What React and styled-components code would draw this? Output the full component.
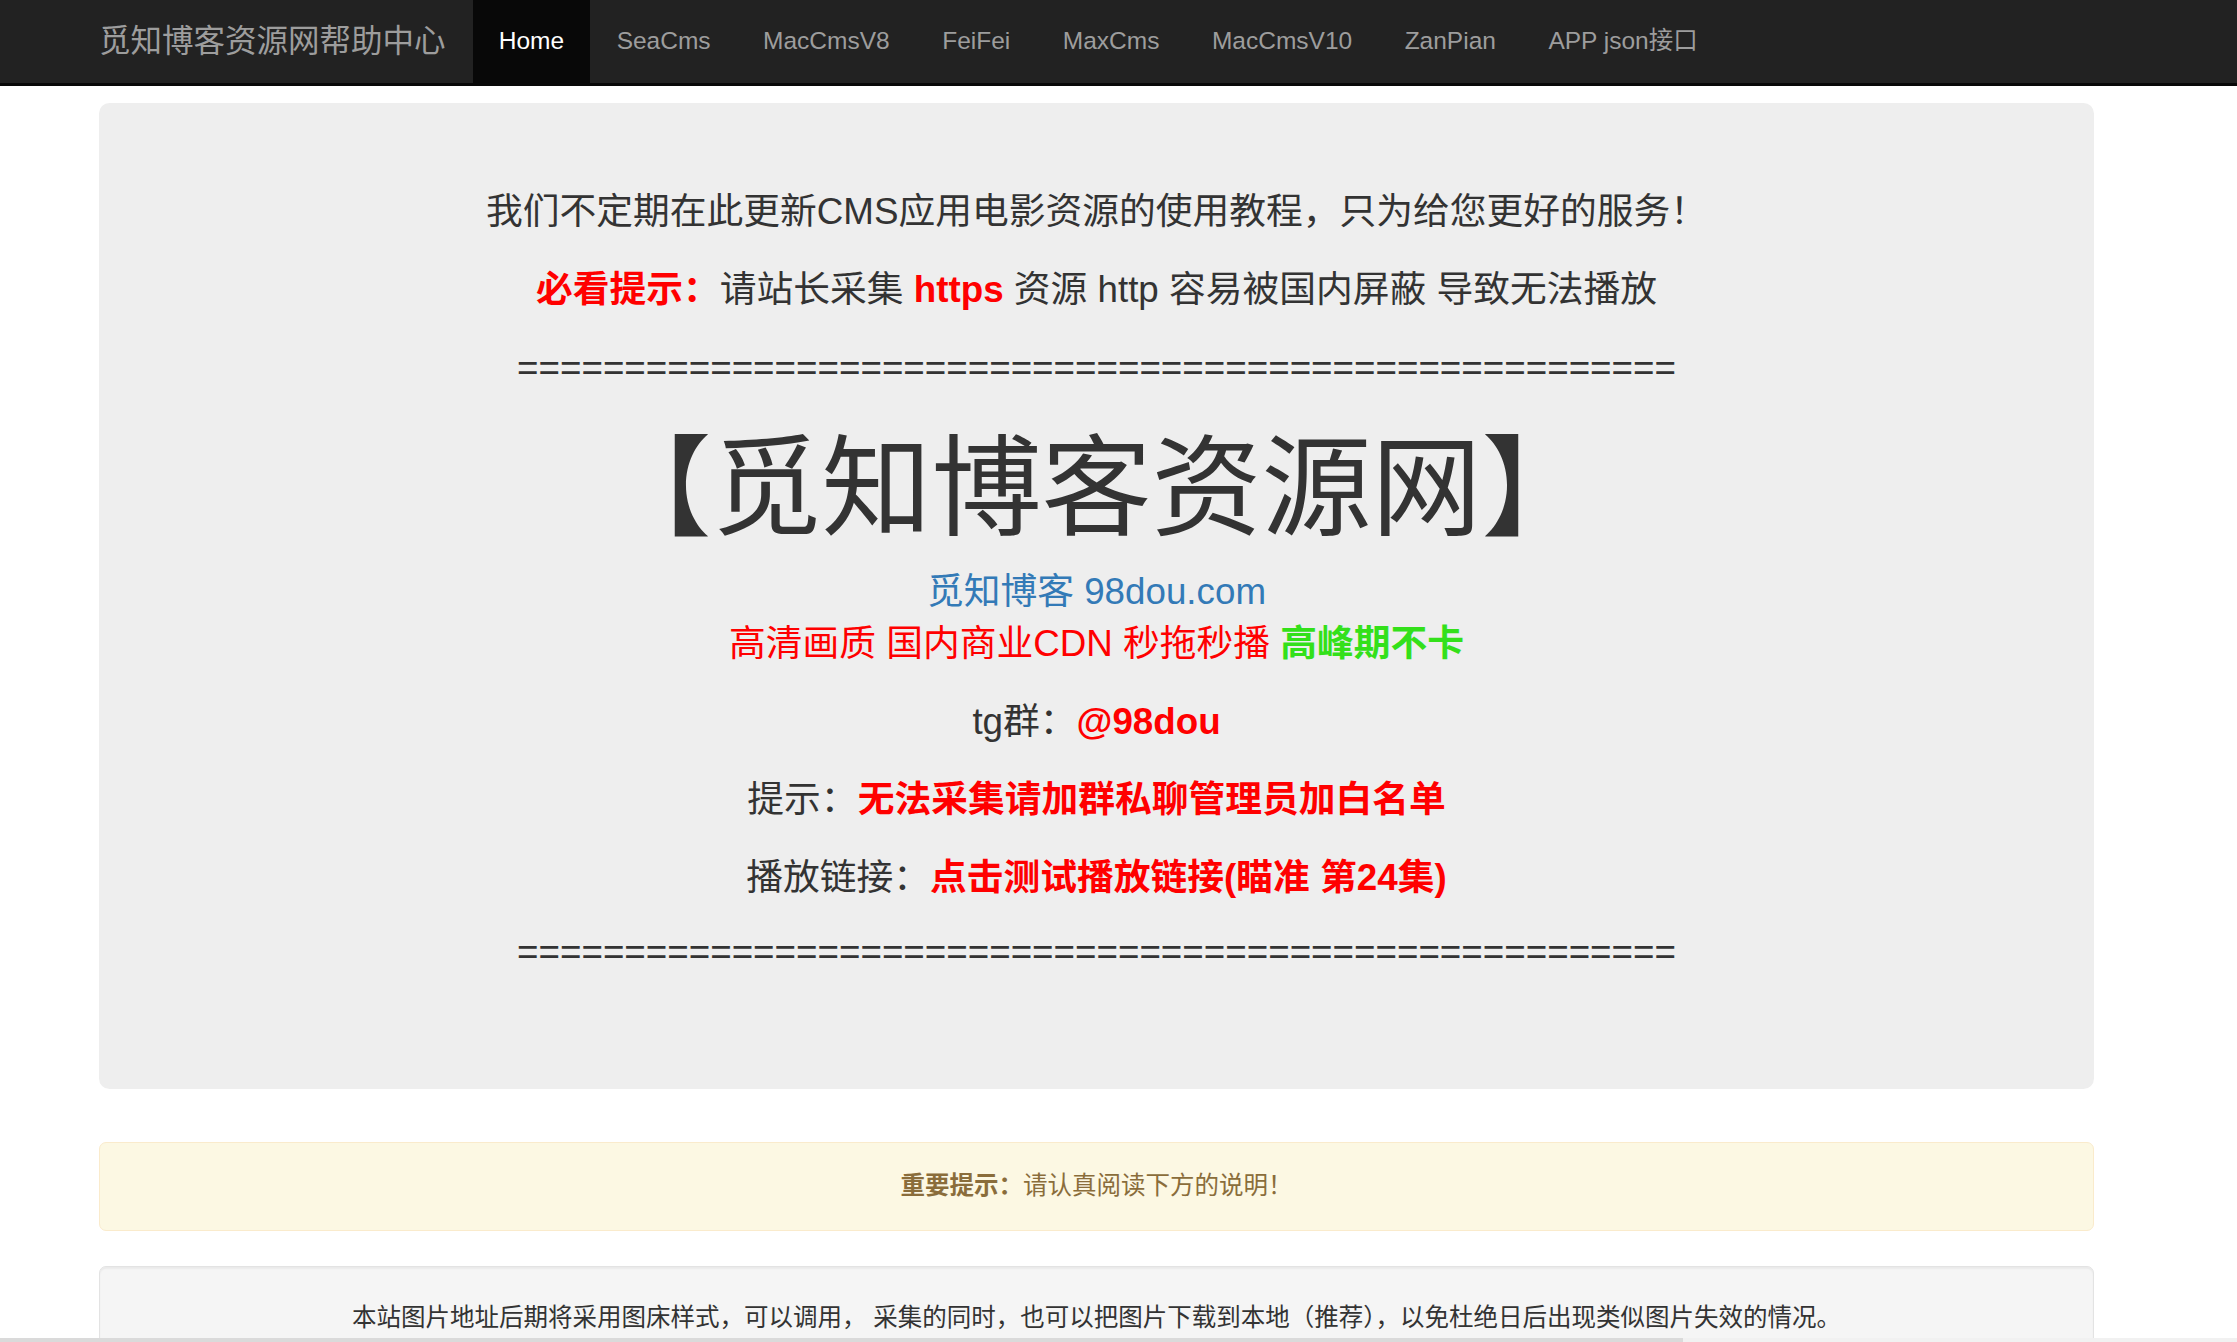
import React from "react";
import styled, { createGlobalStyle } from "styled-components";

const GlobalStyle = createGlobalStyle`
  html, body {
    margin: 0;
    padding: 0;
    background: #fff;
  }
  body {
    font-family: "Liberation Sans", "Noto Sans CJK SC", sans-serif;
    font-size: 24.5px;
    line-height: 1.42857;
    color: #333;
  }
  * {
    box-sizing: border-box;
  }
`;

const navItems = ["Home", "SeaCms", "MacCmsV8", "FeiFei", "MaxCms", "MacCmsV10", "ZanPian", "APP json接口"];

const Navbar = styled.nav`
  height: 86px;
  background: #222;
  border-bottom: 3px solid #080808;
`;

const NavInner = styled.div`
  display: flex;
  align-items: stretch;
  height: 100%;
  margin-left: 99px;
`;

const Brand = styled.a`
  display: flex;
  align-items: center;
  padding-right: 27px;
  font-size: 31.5px;
  color: #9d9d9d;
  text-decoration: none;
`;

const NavList = styled.ul`
  display: flex;
  margin: 0;
  padding: 0;
  list-style: none;
`;

const NavLink = styled.a`
  display: flex;
  align-items: center;
  height: 100%;
  padding: 0 26.25px;
  font-size: 24.5px;
  text-decoration: none;
  color: ${(p) => (p.$active ? "#fff" : "#9d9d9d")};
  background: ${(p) => (p.$active ? "#080808" : "transparent")};
`;

const Container = styled.div`
  width: 1995px;
  margin: 17px 0 0 99px;
`;

const Jumbotron = styled.div`
  padding: 82.5px 105px 85px;
  margin-bottom: 52.5px;
  background: #eee;
  border-radius: 10.5px;
  text-align: center;
`;

const Para = styled.p`
  margin: 0 0 26.25px;
  font-size: 36.75px;
  line-height: 51.75px;
  color: #333;
`;

const Rule = styled(Para)`
  margin-top: ${(p) => p.$pull || 0}px;
`;

const Strong = styled.b`
  color: ${(p) => p.$color || "red"};
  font-weight: 700;
`;

const Title = styled.h1`
  margin: 35px 0 17px;
  font-size: 110px;
  font-weight: 400;
  line-height: 121px;
  color: #333;
`;

const BlueLink = styled.a`
  color: #337ab7;
  text-decoration: none;
`;

const RedText = styled.span`
  color: red;
`;

const Alert = styled.div`
  padding: 26.25px;
  margin-bottom: 35px;
  background: #fcf8e3;
  border: 1.75px solid #faebcc;
  border-radius: 7px;
  color: #8a6d3b;
  text-align: center;
`;

const Well = styled.div`
  padding: 34.5px 33.25px;
  background: #f5f5f5;
  border: 1.75px solid #e3e3e3;
  border-radius: 7px;
  box-shadow: inset 0 1.75px 1.75px rgba(0, 0, 0, 0.05);
  text-align: center;
`;

const ScrollTrack = styled.div`
  position: fixed;
  left: 0;
  right: 0;
  bottom: 0;
  height: 4px;
  background: #f1f1f1;
`;

const ScrollThumb = styled.div`
  width: 1683px;
  height: 100%;
  background: #dadada;
`;

const rule = "=".repeat(54);

export default function App() {
  return (
    <>
      <GlobalStyle />
      <Navbar>
        <NavInner>
          <Brand href="#">觅知博客资源网帮助中心</Brand>
          <NavList>
            {navItems.map((item, i) => (
              <li key={item}>
                <NavLink href="#" $active={i === 0}>
                  {item}
                </NavLink>
              </li>
            ))}
          </NavList>
        </NavInner>
      </Navbar>
      <Container>
        <Jumbotron>
          <Para>我们不定期在此更新CMS应用电影资源的使用教程，只为给您更好的服务！</Para>
          <Para>
            <Strong>必看提示：</Strong>请站长采集 <Strong>https</Strong> 资源 http 容易被国内屏蔽 导致无法播放
          </Para>
          <Rule>{rule}</Rule>
          <Title>【觅知博客资源网】</Title>
          <Para>
            <BlueLink href="#">觅知博客 98dou.com</BlueLink>
            <br />
            <RedText>高清画质 国内商业CDN 秒拖秒播 </RedText>
            <Strong $color="#33e01a">高峰期不卡</Strong>
          </Para>
          <Para>
            tg群：<Strong>@98dou</Strong>
          </Para>
          <Para>
            提示：<Strong>无法采集请加群私聊管理员加白名单</Strong>
          </Para>
          <Para>
            播放链接：<Strong>点击测试播放链接(瞄准 第24集)</Strong>
          </Para>
          <Rule $pull={-4}>{rule}</Rule>
        </Jumbotron>
        <Alert>
          <b>重要提示：</b>请认真阅读下方的说明！
        </Alert>
        <Well>
          本站图片地址后期将采用图床样式，可以调用， 采集的同时，也可以把图片下载到本地（推荐），以免杜绝日后出现类似图片失效的情况。
        </Well>
      </Container>
      <ScrollTrack>
        <ScrollThumb />
      </ScrollTrack>
    </>
  );
}
